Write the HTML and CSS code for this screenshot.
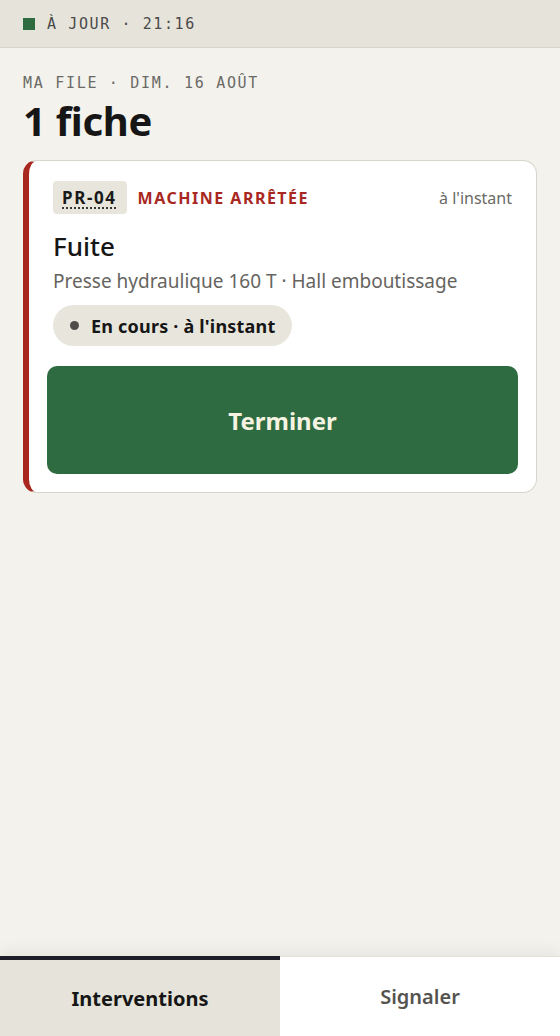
FILE: index.html
```html
<!DOCTYPE html>
<html lang="fr">
<head>
<meta charset="utf-8">
<title>Ma file</title>
<link rel="stylesheet" href="styles.css">
</head>
<body>
<div class="app">
  <header class="statusbar">
    <span class="sync-dot"></span>
    <span class="status-text">À JOUR · 21:16</span>
  </header>
  <main class="main">
    <div class="eyebrow">MA FILE · DIM. 16 AOÛT</div>
    <h1 class="title">1 fiche</h1>
    <article class="card">
      <div class="card-head">
        <abbr class="tag" title="Presse hydraulique 160 T">PR-04</abbr>
        <span class="severity">MACHINE ARRÊTÉE</span>
        <span class="time">à l'instant</span>
      </div>
      <div class="card-body">
        <h2 class="card-title">Fuite</h2>
        <p class="card-sub">Presse hydraulique 160 T · Hall emboutissage</p>
        <div class="pill"><span class="pill-dot"></span>En cours · à l'instant</div>
      </div>
      <button class="btn-primary">Terminer</button>
    </article>
  </main>
  <nav class="tabbar">
    <button class="tab tab-active">Interventions</button>
    <button class="tab">Signaler</button>
  </nav>
</div>
</body>
</html>
```
FILE: styles.css
```css
* { box-sizing: border-box; }
html, body { margin: 0; padding: 0; height: 100%; }
body {
  background: #f3f2ec;
  font-family: "Noto Sans", sans-serif;
  color: #1a1a1a;
}
.app {
  display: flex;
  flex-direction: column;
  height: 100vh;
}
.statusbar {
  height: 48px;
  flex: none;
  display: flex;
  align-items: center;
  gap: 12px;
  padding: 0 23px;
  background: #e6e4da;
  border-bottom: 1px solid #d6d3c8;
}
.sync-dot {
  width: 12px;
  height: 12px;
  background: #2f6b41;
}
.status-text {
  font-family: "DejaVu Sans Mono", monospace;
  font-size: 15px;
  letter-spacing: 1.6px;
  color: #4a4a4a;
}
.main {
  flex: 1;
  padding: 26px 23px 0 23px;
}
.eyebrow {
  font-family: "DejaVu Sans Mono", monospace;
  font-size: 15px;
  letter-spacing: 1.7px;
  color: #6a6a66;
  line-height: 18px;
}
.title {
  margin: 6px 0 16px 0;
  font-size: 40px;
  font-weight: 700;
  letter-spacing: -0.3px;
  line-height: 46px;
  color: #161616;
}
.card {
  width: 514px;
  background: #fff;
  border: 1px solid #d8d5cc;
  border-left: 6px solid #a8281f;
  border-radius: 14px;
  padding: 20px 18px 18px 18px;
}
.card-head {
  display: flex;
  align-items: center;
  gap: 11px;
  padding: 0 6px;
}
.tag {
  background: #e8e6dc;
  border-radius: 4px;
  padding: 6px 10px 6px 9px;
  font-weight: 700;
  font-size: 17px;
  letter-spacing: 1.6px;
  color: #1a1a1a;
  text-decoration: underline dotted;
  text-underline-offset: 4px;
  line-height: 21px;
}
.severity {
  color: #a8281f;
  font-weight: 700;
  font-size: 16px;
  letter-spacing: 1.5px;
}
.time {
  margin-left: auto;
  color: #6a6a66;
  font-size: 16px;
}
.card-body {
  padding: 0 6px;
}
.card-title {
  margin: 17px 0 0 0;
  font-size: 26px;
  font-weight: 500;
  line-height: 30px;
  color: #161616;
}
.card-sub {
  margin: 8px 0 0 0;
  font-size: 19px;
  line-height: 25px;
  color: #66645f;
}
.pill {
  display: inline-flex;
  align-items: center;
  gap: 12px;
  margin-top: 11px;
  height: 41px;
  padding: 0 17px 0 17px;
  background: #e8e6dc;
  border-radius: 21px;
  font-weight: 700;
  font-size: 18px;
  letter-spacing: 0.2px;
  color: #161616;
}
.pill-dot {
  width: 9px;
  height: 9px;
  border-radius: 50%;
  background: #4e4c48;
}
.btn-primary {
  display: block;
  width: 100%;
  height: 108px;
  margin-top: 20px;
  border: none;
  border-radius: 10px;
  background: #2f6b41;
  color: #f6f3e2;
  font-family: inherit;
  font-size: 24px;
  font-weight: 700;
}
.tabbar {
  flex: none;
  height: 80px;
  display: grid;
  grid-template-columns: 1fr 1fr;
  box-shadow: 0 -6px 14px rgba(0,0,0,0.05);
}
.tab {
  border: none;
  border-top: 1px solid #e4e2da;
  background: #fff;
  font-family: inherit;
  font-size: 20px;
  font-weight: 600;
  color: #55534f;
}
.tab-active {
  background: #e6e4da;
  border-top: 4px solid #1e1e28;
  color: #161616;
  font-weight: 700;
}
```
